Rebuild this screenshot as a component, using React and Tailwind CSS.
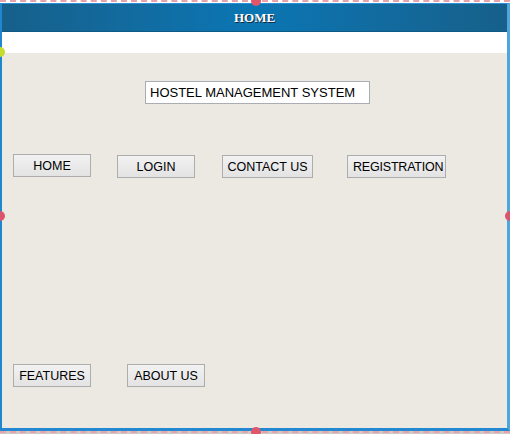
import React from 'react';

const font = { fontFamily: '"Liberation Sans", Arial, sans-serif' };

function FormButton({ label, className = '', align = 'center' }) {
    return (
        <div
            className={`h-[23px] flex items-center pt-px overflow-hidden whitespace-nowrap border border-[#adadad] bg-gradient-to-b from-[#f2f2f2] to-[#e3e3e3] text-[12.5px] text-black ${align === 'left' ? 'justify-start pl-[5px] tracking-[-0.2px]' : 'justify-center'} ${className}`}
        >
            {label}
        </div>
    );
}

function Handle({ className }) {
    return <div className={`absolute w-[10px] h-[10px] rounded-full ${className}`} />;
}

export default function App() {
    return (
        <div className="relative w-[510px] h-[434px] bg-white overflow-hidden flex flex-col" style={font}>
            <div className="h-[3px] border-t-2 border-dashed border-[#e6a3a8]" />

            <div className="h-[428px] flex flex-col border-t border-b-[3px] border-l-2 border-r-[3px] border-t-[#2a8ed8] border-b-[#2388d2] border-l-[#1f86d0] border-r-[#4ea6dc]">
                <div className="h-[28px] flex items-center justify-center bg-gradient-to-r from-[#16608a] via-[#0a76b4] to-[#16608a] border-b border-[#0d5a86]">
                    <span
                        className="text-white font-bold text-[13px]"
                        style={{ fontFamily: '"Liberation Serif", "Times New Roman", serif', textShadow: '1px 1px 0 #1a2a3a' }}
                    >
                        HOME
                    </span>
                </div>
                <div className="h-[21px] bg-white" />
                <div className="flex-1 bg-[#ece9e3] pt-[28px]">
                    <div className="ml-[143px] w-[225px] h-[23px] flex items-center pt-px pl-[4px] bg-white border border-[#abadb3] text-[13px] text-black">
                        HOSTEL MANAGEMENT SYSTEM
                    </div>

                    <div className="mt-[50px] flex items-start">
                        <FormButton label="HOME" className="ml-[11px] w-[78px]" />
                        <FormButton label="LOGIN" className="ml-[26px] mt-px w-[78px]" />
                        <FormButton label="CONTACT US" className="ml-[27px] mt-px w-[91px]" />
                        <FormButton label="REGISTRATION" align="left" className="ml-[34px] mt-px w-[99px]" />
                    </div>

                    <div className="mt-[186px] flex items-start">
                        <FormButton label="FEATURES" className="ml-[11px] w-[78px]" />
                        <FormButton label="ABOUT US" className="ml-[36px] w-[78px]" />
                    </div>
                </div>
            </div>

            <div className="h-[3px] bg-[#cfc9ca] border-t-2 border-dashed border-[#e6a3a8]" />

            <Handle className="left-[251px] top-[-4px] bg-[#e0566a]" />
            <Handle className="left-[-5px] top-[211px] bg-[#d9566a]" />
            <Handle className="left-[505px] top-[211px] bg-[#d9566a]" />
            <Handle className="left-[251px] top-[427px] bg-[#e0566a]" />
            <Handle className="left-[-5px] top-[47px] bg-[#c6dc2c]" />
        </div>
    );
}
